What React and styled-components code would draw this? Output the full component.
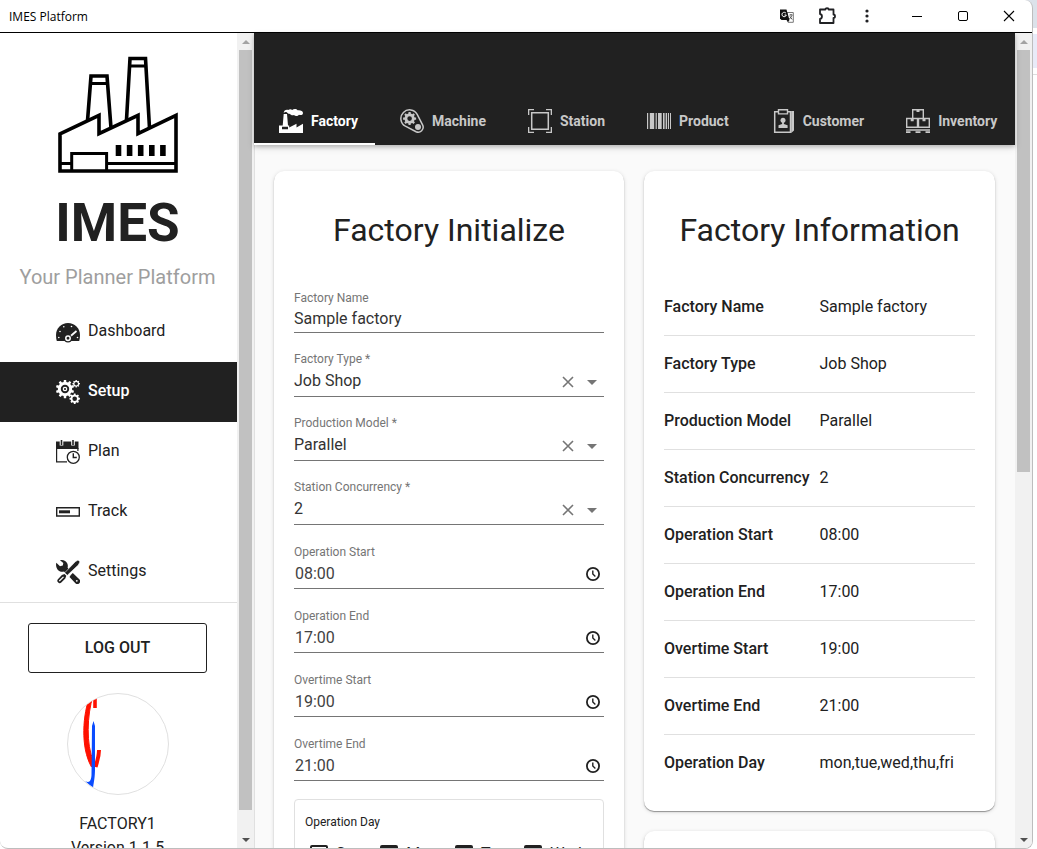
import React, { useState } from 'react';
import styled, { createGlobalStyle, css } from 'styled-components';

const DARK = '#212121';

const GlobalStyle = createGlobalStyle`
  *, *::before, *::after {
    box-sizing: border-box;
  }
  html, body, #root {
    height: 100%;
  }
  body {
    margin: 0;
    overflow: hidden;
    color: ${DARK};
    font-family: Roboto, 'Open Sans', sans-serif;
    font-size: 16px;
    line-height: 24px;
  }
  button, input, select {
    font: inherit;
    color: inherit;
  }
  button {
    padding: 0;
    border: 0;
    background: none;
    cursor: pointer;
  }
`;

/* ---------- window ---------- */

const Desktop = styled.div`
  height: 100%;
  padding-right: 4px;
  background: linear-gradient(
    #dce2ea 28px,
    #fff 28px,
    #fff 34px,
    #e9ebf8 34px,
    #e9ebf8 68px,
    #fff 68px,
    #fff 74px,
    #ddd 74px,
    #ddd 75px,
    #fff 75px
  );
`;

const Window = styled.div`
  display: flex;
  flex-direction: column;
  height: 100%;
  overflow: hidden;
  background: #fff;
  border: solid #bdbdbd;
  border-width: 0 1px 1px 0;
  border-radius: 0 8px 8px 8px;
`;

const TitleBar = styled.header`
  display: flex;
  align-items: center;
  flex: none;
  height: 33px;
  padding-left: 9px;
  color: #000;
  border-bottom: 1px solid #000;
  font-family: 'Open Sans', 'Noto Sans', sans-serif;
  font-size: 12px;
`;

const WindowTitle = styled.span`
  flex: 1;
  padding-top: 1px;
`;

const BarButton = styled.button`
  display: flex;
  align-items: center;
  justify-content: center;
  width: ${({ $wide }) => ($wide ? 46 : 40)}px;
  height: 32px;
`;

const WindowControls = styled.div`
  display: flex;
  margin-left: 7px;
`;

const Body = styled.div`
  display: flex;
  flex: 1;
  min-height: 0;
`;

/* ---------- scroll bar ---------- */

const Track = styled.div`
  display: flex;
  flex-direction: column;
  flex: none;
  align-items: center;
  width: 17px;
  background: #f1f1f1;
`;

const TrackButton = styled.button`
  display: flex;
  align-items: center;
  justify-content: center;
  width: 17px;
  height: 17px;
`;

const Runner = styled.div`
  flex: 1;
  width: 13px;
`;

const Thumb = styled.div`
  height: ${({ $size }) => $size}%;
  background: #c1c1c1;
`;

const ScrollBar = ({ size }) => (
  <Track>
    <TrackButton aria-label="Scroll up">
      <svg width="8" height="4" fill="#a3a3a3">
        <path d="M4 0 8 4H0z" />
      </svg>
    </TrackButton>
    <Runner>
      <Thumb $size={size} />
    </Runner>
    <TrackButton aria-label="Scroll down">
      <svg width="8" height="4" fill="#505050">
        <path d="M0 0H8L4 4z" />
      </svg>
    </TrackButton>
  </Track>
);

/* ---------- side navigation ---------- */

const Sidebar = styled.aside`
  display: flex;
  flex: none;
  width: 254px;
`;

const SidebarContent = styled.div`
  flex: 1;
  overflow: hidden;
  text-align: center;
`;

const Brand = styled.div`
  padding: 21px 2px 0 0;
  svg {
    display: block;
    margin: 0 auto;
  }
`;

const BrandName = styled.h1`
  margin: 17px 0 0;
  font-size: 53px;
  font-weight: 700;
  line-height: 64px;
`;

const Tagline = styled.p`
  margin: 7px 0 10px;
  color: #9e9e9e;
  font-size: 20px;
  line-height: 30px;
`;

const Nav = styled.nav`
  border-bottom: 1px solid #e0e0e0;
`;

const NavLink = styled.a`
  display: flex;
  align-items: center;
  gap: 8px;
  height: 60px;
  padding-left: 56px;
  color: inherit;
  text-decoration: none;
  span {
    padding-bottom: 3px;
  }
  ${({ $active }) =>
    $active &&
    css`
      background: ${DARK};
      color: #fff;
      font-weight: 500;
    `}
`;

const Profile = styled.div`
  padding: 20px 2px 0 0;
`;

const LogoutButton = styled.button`
  display: block;
  width: calc(100% - 56px);
  height: 50px;
  margin: 0 auto 20px;
  border: 1px solid ${DARK};
  border-radius: 3px;
  font-weight: 500;
  text-transform: uppercase;
`;

const Avatar = styled.div`
  width: 102px;
  height: 102px;
  margin: 0 auto 17px;
  overflow: hidden;
  border: 1px solid #e0e0e0;
  border-radius: 50%;
`;

const Account = styled.p`
  margin: 0;
`;

/* ---------- main area ---------- */

const Main = styled.main`
  display: flex;
  flex: 1;
  min-width: 0;
`;

const Page = styled.div`
  display: flex;
  flex-direction: column;
  flex: 1;
  min-width: 0;
  background: #fafafa;
`;

const Toolbar = styled.div`
  display: flex;
  align-items: flex-end;
  flex: none;
  height: 112px;
  overflow: hidden;
  background: ${DARK};
`;

const ToolbarShadow = styled.div`
  position: relative;
  z-index: 1;
  box-shadow: 0 2px 4px rgba(0, 0, 0, 0.2), 0 3px 8px rgba(0, 0, 0, 0.1);
`;

const Tab = styled.a`
  display: flex;
  align-items: center;
  flex: none;
  gap: 8px;
  height: 48px;
  padding: 0 17px 0 25px;
  color: ${({ $active }) => ($active ? '#fff' : '#c8c8c8')};
  font-size: 14px;
  font-weight: 700;
  text-decoration: none;
  box-shadow: ${({ $active }) => ($active ? 'inset 0 -2px #fff' : 'none')};
`;

const Scroller = styled.div`
  flex: 1;
  min-height: 0;
  overflow: hidden;
  border-left: 1px solid #e0e0e0;
`;

const Columns = styled.div`
  display: grid;
  grid-template-columns: 350fr 351fr;
  align-items: start;
  gap: 20px;
  padding: 26px 20px 20px 19px;
`;

const Column = styled.div`
  display: grid;
  gap: 20px;
  min-width: 0;
`;

const Card = styled.section`
  min-height: 120px;
  padding: 20px;
  background: #fff;
  border-radius: 10px;
  box-shadow: 0 1px 1px rgba(0, 0, 0, 0.36), 0 1px 4px rgba(0, 0, 0, 0.14);
`;

const CardTitle = styled.h2`
  margin: 0;
  font-size: 32px;
  font-weight: 400;
  line-height: 78px;
  text-align: center;
  white-space: nowrap;
`;

/* ---------- form ---------- */

const FieldBox = styled.div`
  display: flex;
  flex-direction: column;
  justify-content: flex-end;
  height: 64px;
  border-bottom: 1px solid #757575;
`;

const FieldLabel = styled.label`
  color: #757575;
  font-size: 12px;
  line-height: 16px;
`;

const CONTROL_PADDING = {
  text: '1px 0',
  time: '2px 0',
  select: '2px 0 3px',
};

const Control = styled.div`
  display: flex;
  align-items: center;
  padding: ${({ $kind }) => CONTROL_PADDING[$kind]};
  color: ${({ $kind }) => ($kind === 'time' ? '#424242' : '#333')};
`;

const controlReset = css`
  flex: 1;
  min-width: 0;
  height: 24px;
  padding: 0;
  border: 0;
  outline: 0;
  background: none;
`;

const TextInput = styled.input`
  ${controlReset}
  padding-left: ${({ $time }) => ($time ? 1 : 0)}px;
`;

const SelectInput = styled.select`
  ${controlReset}
  appearance: none;
`;

const IconButton = styled.button`
  display: flex;
  align-items: center;
  justify-content: center;
  width: 24px;
  height: 22px;
  padding-top: ${({ $low }) => ($low ? 2 : 0)}px;
`;

const TextField = ({ id, label, value, time }) => (
  <FieldBox>
    <FieldLabel htmlFor={id}>{label}</FieldLabel>
    <Control $kind={time ? 'time' : 'text'}>
      <TextInput id={id} defaultValue={value} $time={time} />
      {time && (
        <IconButton aria-label={`Pick ${label}`}>
          <svg width="16" height="16" fill="none" stroke="#212121" strokeWidth="1.8">
            <circle cx="9" cy="8" r="6.1" />
            <path d="M8.800 4.500V8l2.600 2.400" strokeWidth="1.4" />
          </svg>
        </IconButton>
      )}
    </Control>
  </FieldBox>
);

const SelectField = ({ id, label, options }) => {
  const [value, setValue] = useState(options[0]);
  return (
    <FieldBox>
      <FieldLabel htmlFor={id}>{label} *</FieldLabel>
      <Control $kind="select">
        <SelectInput id={id} value={value} onChange={e => setValue(e.target.value)}>
          <option value="" />
          {options.map(option => (
            <option key={option}>{option}</option>
          ))}
        </SelectInput>
        <IconButton $low aria-label={`Clear ${label}`} onClick={() => setValue('')}>
          <svg width="12" height="12" stroke="#757575" strokeWidth="1.6">
            <path d="M1 1 11 11M11 1 1 11" />
          </svg>
        </IconButton>
        <IconButton $low as="span" aria-hidden="true">
          <svg width="10" height="5" fill="#757575">
            <path d="M0 0H10L5 5z" />
          </svg>
        </IconButton>
      </Control>
    </FieldBox>
  );
};

const DayGroup = styled.div`
  margin-top: 18px;
  padding: 10px 10px 20px;
  border: 1px solid #e0e0e0;
  border-radius: 4px;
`;

const GroupTitle = styled.div`
  font-size: 12px;
`;

const DayList = styled.div`
  display: flex;
  flex-wrap: wrap;
  gap: 17px;
  padding: 8px 0 0 5px;
`;

const DayLabel = styled.label`
  display: flex;
  align-items: center;
  gap: 8px;
`;

const DayCheck = styled.input`
  appearance: none;
  width: 18px;
  height: 18px;
  margin: 0;
  border: 2px solid ${DARK};
  border-radius: 2px;
  &:checked {
    background: ${DARK};
  }
`;

/* ---------- information table ---------- */

const InfoTable = styled.table`
  width: 100%;
  margin-top: 10px;
  border-collapse: separate;
  border-spacing: 0;
`;

const InfoRow = styled.tr`
  th,
  td {
    height: 57px;
    padding: 0;
    border-bottom: 1px solid #e0e0e0;
    text-align: left;
  }
  th {
    width: 1%;
    padding-right: 10px;
    font-weight: 500;
    white-space: nowrap;
  }
  &:last-child th,
  &:last-child td {
    height: 56px;
    border-bottom: 0;
  }
`;

/* ---------- icons ---------- */

const gear = (cx, cy, outer, teeth, hole) => {
  const inner = outer * 0.78;
  const step = (Math.PI * 2) / teeth;
  const at = (r, a) => `${(cx + r * Math.cos(a)).toFixed(2)} ${(cy + r * Math.sin(a)).toFixed(2)}`;
  const points = [];
  for (let i = 0; i < teeth; i += 1) {
    const a = i * step - Math.PI / 2;
    points.push(
      at(inner, a - step * 0.3),
      at(outer, a - step * 0.2),
      at(outer, a + step * 0.2),
      at(inner, a + step * 0.3),
    );
  }
  return `M${points.join('L')}ZM${cx - hole} ${cy}a${hole} ${hole} 0 1 0 ${hole * 2} 0a${hole} ${hole} 0 1 0 ${-hole * 2} 0Z`;
};

const Icon = ({ children }) => (
  <svg width="24" height="24" viewBox="0 0 24 24" fill="currentColor" fillRule="evenodd" aria-hidden="true">
    {children}
  </svg>
);

const line = { fill: 'none', stroke: 'currentColor' };

const DashboardIcon = () => (
  <Icon>
    <path d="M12 3C5.4 3 0 8.4 0 15c0 2.300.2 4.300.8 6h22.400C23.800 19.300 24 17.300 24 15 24 8.400 18.600 3 12 3z" />
    <g fill="#fff">
      <circle cx="2.800" cy="17.500" r=".8" />
      <circle cx="4" cy="11.500" r=".8" />
      <circle cx="7.800" cy="6.800" r=".8" />
      <circle cx="15.500" cy="6.500" r=".8" />
      <circle cx="21.500" cy="17.500" r=".8" />
    </g>
    <path d="M13.500 17 20.500 11" stroke="#fff" strokeWidth="1.800" />
    <circle cx="12" cy="18.500" r="4" />
    <circle cx="12" cy="18.300" r="2.200" fill="none" stroke="#fff" strokeWidth="1.500" />
  </Icon>
);

const SetupIcon = () => (
  <Icon>
    <path d={gear(9, 9, 9.2, 10, 4.2)} />
    <circle cx="9" cy="9" r="2.300" />
    <circle cx="9" cy="9" r="1.100" fill={DARK} />
    <path d={gear(20.2, 3.7, 3.8, 8, 1.8)} />
    <path d={gear(18.7, 18.7, 5.3, 8, 2.3)} />
  </Icon>
);

const PlanIcon = () => (
  <Icon>
    <path d="M0 1.500H22.500V9H0z" />
    <path d="M.6 8V21.900H11M21.900 8v3" {...line} strokeWidth="1.200" />
    <path d="M5.500 0V5.500M17 0V5.500" stroke="#fff" strokeWidth="3.600" />
    <path d="M5.500 0V5M17 0V5" stroke="currentColor" strokeWidth="1.600" />
    <circle cx="17.300" cy="17.300" r="6" fill="#fff" stroke="currentColor" strokeWidth="1.300" />
    <path d="M17.300 13.300v4.200h3.500" {...line} strokeWidth="1.400" />
  </Icon>
);

const TrackIcon = () => (
  <Icon>
    <path d="M.7 7.700H23.300V16H.7z" {...line} strokeWidth="1.400" />
    <path d="M3 10.300H14v3H3z" />
  </Icon>
);

const ToolsIcon = () => (
  <Icon>
    <path d="M.3 2.800 4 6.300 6.800 5.400 7.300 3 4 .3C7-.6 10 .8 11.300 3.600c.7 1.500.6 3 .3 4.200L14.500 11l-3.600 3.500L8 11.600c-2.500.6-5-.2-6.500-2.200C.2 7.500-.3 5 .3 2.800z" />
    <path d="M14.800 15 16.800 13 23.300 19.200a2.700 2.700 0 0 1-3.900 4l-5.900-6.100z" />
    <circle cx="20.800" cy="20.800" r=".9" fill="#fff" />
    <path d="M22 0 24 1.800 22.300 5 11.300 15.300 8.700 12.800 19.300 1.700z" stroke="#fff" strokeWidth=".6" />
    <path d="M8.500 14 10.300 15.700 9.300 18.500 5.300 22.500a2.200 2.200 0 0 1-3.500-.4 2.200 2.200 0 0 1 .1-2.800L5.900 15z" />
    <path d="M7.500 16.800 3.300 21" stroke="#fff" strokeWidth="1.200" />
  </Icon>
);

const FactoryIcon = () => (
  <Icon>
    <path d="M0 24V16.500H3.700L4.700 5H8l1 11.500h1.200v1.900L17.500 14.800V18.400L24 14.800V24zM3 17.700v2.600h6v-2.600z" />
    <path d="M4.700 4C4.800 1.400 7 .2 9.200.9c1.500-1 3-.9 4 .1 1.500-1.400 4.500-1.200 5.400.3C20.800.7 24 1.700 24 3.900 24 6 21.300 6.600 20 5.700 18.800 7.400 16 7.300 15 6c-1.600.7-3.300.2-4.100-1.200C9.500 5.300 8.700 4 8 3.500 7 2.800 5.800 3 4.700 4z" />
  </Icon>
);

const MachineIcon = () => (
  <Icon>
    <path
      d="M5.400 17.200A8.700 8.700 0 1 1 17.200 5.400L22.700 16.100A5 5 0 0 1 16.100 22.700Z"
      {...line}
      strokeWidth="1.500"
    />
    <path d={gear(9.6, 9.6, 6.6, 8, 2.3)} />
    <circle cx="18" cy="18" r="3" />
  </Icon>
);

const StationIcon = () => (
  <Icon>
    <path d="M3.700 3.700H20.300V20.300H3.700z" {...line} strokeWidth="1.500" />
    <path d="M.6 6V.6H6M18 .6h5.400V6M23.400 18v5.400H18M6 23.400H.6V18" {...line} strokeWidth="1.400" />
  </Icon>
);

const ProductIcon = () => (
  <Icon>
    <path d="M0 4h1.200v16H0zM2.800 4h4.400v16H2.800zM8.600 4h1.200v16H8.600zM11 4h3.700v16H11zM16 4h1.600v16H16zM18.600 4h1.400v16h-1.400zM20.900 4h1.100v16h-1.100zM23 4h1v16h-1z" />
  </Icon>
);

const CustomerIcon = () => (
  <Icon>
    <path d="M3.700 2.700H19.500V23.300H3.700z" {...line} strokeWidth="1.500" />
    <path d="M20.200 2H23V21.500L20.200 24z" />
    <path d="M7.500 .7H16.500V4.900H7.500z" fill={DARK} stroke="currentColor" strokeWidth="1.400" />
    <circle cx="12" cy="11.300" r="2.500" />
    <path d="M11.100 12h1.800v3l3.700 1.300V19H7.500V16.300L11.100 15z" />
  </Icon>
);

const InventoryIcon = () => (
  <Icon>
    <path d="M6.700 9.500V.7H17.300V9.500M.7 9.500H11.500V18.300H.7zM12.500 9.500H23.300V18.300H12.500z" {...line} strokeWidth="1.400" />
    <path d="M10.500 0h3v3h-3zM4.700 9h3v3.200h-3zM16.500 9h3v3.200h-3zM0 20.300H24v1.500H0zM0 22.300H4.500V24H0zM9.500 22.300h5V24h-5zM19.500 22.300H24V24h-4.500z" />
  </Icon>
);

const Logo = () => (
  <svg width="120" height="120" viewBox="0 0 120 120" fill="none" stroke="#000" strokeWidth="3.6" role="img" aria-label="IMES">
    <path d="M2 117V80L41 61.300V79.700L80 61.300V79.700L118 61.300V117z" />
    <path d="M29.500 67 33 22H49L53 74M68.500 66 72 4.500H87.500L91.500 74" />
    <path d="M32 29.500H50M71 12H89M13.700 117V99.600H48.600V117M2 109.500H13.700M48.600 109.500H118" strokeWidth="3" />
    <path d="M60.500 91v11M71.600 91v11M82.700 91v11M93.800 91v11M104.900 91v11" strokeWidth="5.600" />
  </svg>
);

const Portrait = () => (
  <svg width="100" height="100" viewBox="1 1 100 100" fill="none">
    <path d="M23 3C16 20 13 54 24.500 74L26.500 68C19 52 20 22 26 3z" fill="#f10" stroke="#f10" strokeWidth="1" />
    <path d="M28 4V15" stroke="#f10" strokeWidth="3.600" />
    <path d="M32 57C32 64 30 69 28.500 74" stroke="#f10" strokeWidth="4" />
    <path d="M26.500 28 28 33V76C28 84 27 88 26 95L18 88C22 90 24 89 24.500 82L25 33z" fill="#0a4cff" />
  </svg>
);

/* ---------- data ---------- */

const NAV_ITEMS = [
  { title: 'Dashboard', icon: DashboardIcon },
  { title: 'Setup', icon: SetupIcon, active: true },
  { title: 'Plan', icon: PlanIcon },
  { title: 'Track', icon: TrackIcon },
  { title: 'Settings', icon: ToolsIcon },
];

const TABS = [
  { title: 'Factory', icon: FactoryIcon, active: true },
  { title: 'Machine', icon: MachineIcon },
  { title: 'Station', icon: StationIcon },
  { title: 'Product', icon: ProductIcon },
  { title: 'Customer', icon: CustomerIcon },
  { title: 'Inventory', icon: InventoryIcon },
];

const INFO = [
  ['Factory Name', 'Sample factory'],
  ['Factory Type', 'Job Shop'],
  ['Production Model', 'Parallel'],
  ['Station Concurrency', '2'],
  ['Operation Start', '08:00'],
  ['Operation End', '17:00'],
  ['Overtime Start', '19:00'],
  ['Overtime End', '21:00'],
  ['Operation Day', 'mon,tue,wed,thu,fri'],
];

const DAYS = ['Sun', 'Mon', 'Tue', 'Wed'];

const App = () => (
  <Desktop>
    <GlobalStyle />
    <Window>
      <TitleBar>
        <WindowTitle>IMES Platform</WindowTitle>
        <BarButton aria-label="Translate">
          <svg width="14" height="14" viewBox="0 0 14 14" fill="none">
            <path d="M7 3.500H13.300V13.300H8z" fill="#fff" stroke="#777" />
            <path d="M9.500 6H12.500M11 5v1M12 6.500 9.500 10M10 7.500l2.200 3" stroke="#555" />
            <path d="M0 .5H6.500L9.500 11H1.500L0 9.500z" fill="#111" />
            <path d="M6 4.300A2.200 2.200 0 1 0 6.300 6H4.500" stroke="#fff" />
            <path d="M6.500 11H9.500L8 13z" fill="#111" />
          </svg>
        </BarButton>
        <BarButton aria-label="Extensions">
          <svg width="18" height="18" viewBox="0 0 18 18" fill="none" stroke="#202124" strokeWidth="1.8" strokeLinejoin="round">
            <path d="M2 2.500H7.300C7.300.8 10.700.8 10.700 2.500H15.500V7.500C17.500 7.500 17.500 11 15.500 11V16H2V12C4.600 11.500 4.600 7.500 2 7z" />
          </svg>
        </BarButton>
        <BarButton aria-label="More">
          <svg width="4" height="14" fill="#202124">
            <circle cx="2" cy="2" r="1.600" />
            <circle cx="2" cy="7" r="1.600" />
            <circle cx="2" cy="12" r="1.600" />
          </svg>
        </BarButton>
        <WindowControls>
          <BarButton $wide aria-label="Minimize">
            <svg width="10" height="10" stroke="#000">
              <path d="M0 5.500H10" />
            </svg>
          </BarButton>
          <BarButton $wide aria-label="Maximize">
            <svg width="10" height="10" fill="none" stroke="#000">
              <rect x=".5" y=".5" width="9" height="9" rx="1.500" />
            </svg>
          </BarButton>
          <BarButton $wide aria-label="Close">
            <svg width="12" height="12" stroke="#000" strokeWidth="1.100">
              <path d="M1 1 11 11M11 1 1 11" />
            </svg>
          </BarButton>
        </WindowControls>
      </TitleBar>
      <Body>
        <Sidebar>
          <SidebarContent>
            <Brand>
              <Logo />
              <BrandName>IMES</BrandName>
              <Tagline>Your Planner Platform</Tagline>
            </Brand>
            <Nav>
              {NAV_ITEMS.map(({ title, icon: NavIcon, active }) => (
                <NavLink key={title} href="#" $active={active}>
                  <NavIcon />
                  <span>{title}</span>
                </NavLink>
              ))}
            </Nav>
            <Profile>
              <LogoutButton>Log out</LogoutButton>
              <Avatar>
                <Portrait />
              </Avatar>
              <Account>FACTORY1</Account>
              <Account>Version 1.1.5</Account>
            </Profile>
          </SidebarContent>
          <ScrollBar size={97.3} />
        </Sidebar>
        <Main>
          <Page>
            <ToolbarShadow>
              <Toolbar>
                {TABS.map(({ title, icon: TabIcon, active }) => (
                  <Tab key={title} href="#" $active={active}>
                    <TabIcon />
                    {title}
                  </Tab>
                ))}
              </Toolbar>
            </ToolbarShadow>
            <Scroller>
              <Columns>
                <Card>
                  <CardTitle>Factory Initialize</CardTitle>
                  <TextField id="factory-name" label="Factory Name" value="Sample factory" />
                  <SelectField id="factory-type" label="Factory Type" options={['Job Shop', 'Flow Shop']} />
                  <SelectField id="production-model" label="Production Model" options={['Parallel', 'Serial']} />
                  <SelectField id="concurrency" label="Station Concurrency" options={['2', '1', '3']} />
                  <TextField id="operation-start" label="Operation Start" value="08:00" time />
                  <TextField id="operation-end" label="Operation End" value="17:00" time />
                  <TextField id="overtime-start" label="Overtime Start" value="19:00" time />
                  <TextField id="overtime-end" label="Overtime End" value="21:00" time />
                  <DayGroup role="group" aria-labelledby="operation-day">
                    <GroupTitle id="operation-day">Operation Day</GroupTitle>
                    <DayList>
                      {DAYS.map(day => (
                        <DayLabel key={day}>
                          <DayCheck type="checkbox" defaultChecked={day !== 'Sun'} />
                          {day}
                        </DayLabel>
                      ))}
                    </DayList>
                  </DayGroup>
                </Card>
                <Column>
                  <Card>
                    <CardTitle>Factory Information</CardTitle>
                    <InfoTable>
                      <tbody>
                        {INFO.map(([name, value]) => (
                          <InfoRow key={name}>
                            <th scope="row">{name}</th>
                            <td>{value}</td>
                          </InfoRow>
                        ))}
                      </tbody>
                    </InfoTable>
                  </Card>
                  <Card />
                </Column>
              </Columns>
            </Scroller>
          </Page>
          <ScrollBar size={54} />
        </Main>
      </Body>
    </Window>
  </Desktop>
);

export default App;
